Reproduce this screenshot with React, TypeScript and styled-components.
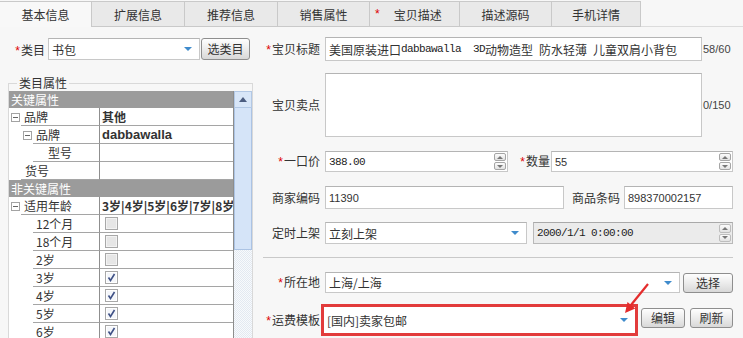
import React from "react";
import styled, { createGlobalStyle } from "styled-components";

const CJK = '"Noto Sans CJK SC", "Microsoft YaHei", sans-serif';
const SANS = '"Liberation Sans", Arial, "Noto Sans CJK SC", sans-serif';
const MONO = '"Liberation Mono", "Courier New", monospace';

const GlobalStyle = createGlobalStyle`
  html, body { margin: 0; padding: 0; background: #f7f7f7; }
  body { font-family: ${CJK}; font-size: 12px; color: #333; }
  * { box-sizing: border-box; }
`;

const TABS = [
  { label: "基本信息", width: 92, active: true },
  { label: "扩展信息", width: 93 },
  { label: "推荐信息", width: 93 },
  { label: "销售属性", width: 92 },
  { label: "宝贝描述", width: 90, required: true },
  { label: "描述源码", width: 92 },
  { label: "手机详情", width: 89 },
];

type TreeItem =
  | { kind: "head"; text: string }
  | {
      kind: "row";
      name: string;
      gutter: number;
      pad: number;
      toggleAt?: number;
      value?: React.ReactNode;
      check?: boolean;
    };

const Check = ({ checked }: { checked?: boolean }) => (
  <svg width="13" height="13" viewBox="0 0 13 13">
    <rect x="0.5" y="0.5" width="12" height="12" fill={checked ? "#f4f6fa" : "#e6e6e6"} stroke="#a8a8a8" />
    <rect x="1.5" y="1.5" width="10" height="10" fill="none" stroke={checked ? "#ffffff" : "#f3f3f3"} />
    {checked && (
      <path d="M3.5 6.5 L5.5 9.5 L9.5 3" fill="none" stroke="#3f5186" strokeWidth="1.6" />
    )}
  </svg>
);

// built at render time so the styled parts below are already defined
function buildTree(): TreeItem[] {
  return [
    { kind: "head", text: "关键属性" },
    { kind: "row", name: "品牌", gutter: 12, pad: 3, toggleAt: 2, value: <b>其他</b> },
    { kind: "row", name: "品牌", gutter: 24, pad: 3, toggleAt: 14, value: <BoldLatin>dabbawalla</BoldLatin> },
    { kind: "row", name: "型号", gutter: 24, pad: 15 },
    { kind: "row", name: "货号", gutter: 12, pad: 4 },
    { kind: "head", text: "非关键属性" },
    { kind: "row", name: "适用年龄", gutter: 12, pad: 3, toggleAt: 2, value: <b>3岁|4岁|5岁|6岁|7岁|8岁</b> },
    { kind: "row", name: "12个月", gutter: 24, pad: 3, check: true, value: <Check /> },
    { kind: "row", name: "18个月", gutter: 24, pad: 3, check: true, value: <Check /> },
    { kind: "row", name: "2岁", gutter: 24, pad: 3, check: true, value: <Check /> },
    { kind: "row", name: "3岁", gutter: 24, pad: 3, check: true, value: <Check checked /> },
    { kind: "row", name: "4岁", gutter: 24, pad: 3, check: true, value: <Check checked /> },
    { kind: "row", name: "5岁", gutter: 24, pad: 3, check: true, value: <Check checked /> },
    { kind: "row", name: "6岁", gutter: 24, pad: 3, check: true, value: <Check checked /> },
  ];
}

const Spinner = ({ disabled }: { disabled?: boolean }) => (
  <Spin>
    <SpinBtn $disabled={disabled}>
      <Tri $up />
    </SpinBtn>
    <SpinBtn $disabled={disabled}>
      <Tri />
    </SpinBtn>
  </Spin>
);

export default function App() {
  const tree = buildTree();
  return (
    <Page>
      <GlobalStyle />
      <TabBar>
        {TABS.map((t) => (
          <Tab key={t.label} $w={t.width} $active={!!t.active} $req={!!t.required}>
            {t.required && <TabStar>*</TabStar>}
            {t.label}
          </Tab>
        ))}
        <TabFiller />
      </TabBar>

      <Body>
        <LeftCol>
          <LeftRow>
            <LeftLabel>
              <Req>*</Req>类目
            </LeftLabel>
            <Field $w={152}>
              <Value>书包</Value>
              <DropArrow />
            </Field>
            <Button $w={49} $h={22} style={{ marginLeft: 1 }}>
              选类目
            </Button>
          </LeftRow>

          <Fieldset>
            <Legend>类目属性</Legend>
            <TreeBox>
              <Tree>
                {tree.map((item, i) =>
                  item.kind === "head" ? (
                    <HeadRow key={i}>{item.text}</HeadRow>
                  ) : (
                    <TreeRow key={i}>
                      <NameCell>
                        <Gutter $w={item.gutter}>
                          {item.toggleAt !== undefined && <Toggle $ml={item.toggleAt} />}
                        </Gutter>
                        <NameBox $pad={item.pad}>{item.name}</NameBox>
                      </NameCell>
                      <ValueCell $check={!!item.check}>{item.value}</ValueCell>
                    </TreeRow>
                  )
                )}
              </Tree>
              <ScrollBar>
                <ScrollUp>
                  <UpTri />
                </ScrollUp>
                <Thumb />
              </ScrollBar>
            </TreeBox>
          </Fieldset>
        </LeftCol>

        <RightCol>
          <Row $mt={0} $h={24}>
            <Label>
              <Req>*</Req>宝贝标题
            </Label>
            <Field $w={377}>
              <Value>
                美国原装进口<Mono>dabbawalla  3D</Mono>动物造型<Mono> </Mono>防水轻薄<Mono> </Mono>儿童双肩小背包
              </Value>
            </Field>
            <Counter>58/60</Counter>
          </Row>

          <Row $mt={12} $h={64}>
            <Label>宝贝卖点</Label>
            <Field $w={377} />
            <Counter>0/150</Counter>
          </Row>

          <Row $mt={14} $h={21}>
            <Label>
              <Req>*</Req>一口价
            </Label>
            <Field $w={183}>
              <Value>
                <Mono>388.00</Mono>
              </Value>
              <Spinner />
            </Field>
            <Label $w={42} $mr={1}>
              <Req>*</Req>数量
            </Label>
            <Field $w={182}>
              <Value>
                <Num>55</Num>
              </Value>
              <Spinner />
            </Field>
          </Row>

          <Row $mt={14} $h={23}>
            <Label>商家编码</Label>
            <Field $w={239}>
              <Value>
                <Num>11390</Num>
              </Value>
            </Field>
            <Label $w={56} $mr={4}>
              商品条码
            </Label>
            <Field $w={109}>
              <Value>
                <Num>898370002157</Num>
              </Value>
            </Field>
          </Row>

          <Row $mt={13} $h={22}>
            <Label>定时上架</Label>
            <Field $w={202}>
              <Value>立刻上架</Value>
              <DropArrow />
            </Field>
            <Field $w={200} $disabled style={{ marginLeft: 6 }}>
              <Value>
                <Mono>2000/1/1 0:00:00</Mono>
              </Value>
              <Spinner disabled />
            </Field>
          </Row>

          <Divider />

          <Row $mt={14} $h={21}>
            <Label>
              <Req>*</Req>所在地
            </Label>
            <Field $w={355}>
              <Value>上海/上海</Value>
              <DropArrow />
            </Field>
            <Button $w={50} $h={20} style={{ marginLeft: 3 }}>
              选择
            </Button>
          </Row>

          <Row $mt={11} $h={32}>
            <Label $mr={1}>
              <Req>*</Req>运费模板
            </Label>
            <RedBox>
              <Field $w={311} $plain>
                <Value>[国内]卖家包邮</Value>
                <DropArrow />
              </Field>
            </RedBox>
            <Button $w={44} $h={20} style={{ marginLeft: 3, marginBottom: 5 }}>
              编辑
            </Button>
            <Button $w={43} $h={20} style={{ marginLeft: 5, marginBottom: 5 }}>
              刷新
            </Button>
          </Row>
        </RightCol>
      </Body>

      <Annotation width="743" height="338" viewBox="0 0 743 338">
        <line x1="648" y1="284" x2="631" y2="305" stroke="#e42c2c" strokeWidth="2.2" />
        <polygon points="625,313 627.5,302 635.3,308.5" fill="#e42c2c" />
      </Annotation>
    </Page>
  );
}

const Page = styled.div`
  position: relative;
  width: 743px;
  height: 338px;
  overflow: hidden;
  background: #f7f7f7;
`;

const TabBar = styled.div`
  display: flex;
  height: 27px;
  padding-top: 1px;
`;

const Tab = styled.div<{ $w: number; $active: boolean; $req: boolean }>`
  width: ${(p) => p.$w}px;
  height: 26px;
  display: flex;
  align-items: center;
  justify-content: ${(p) => (p.$req ? "flex-start" : "center")};
  padding-left: ${(p) => (p.$req ? 5 : 0)}px;
  border-top: 1px solid #c9c9c9;
  border-right: 1px solid #c9c9c9;
  border-bottom: ${(p) => (p.$active ? "none" : "1px solid #c9c9c9")};
  background: ${(p) => (p.$active ? "#f8f8f8" : "#e9e9e9")};
  color: #333;
  white-space: nowrap;
  flex-shrink: 0;
`;

const TabStar = styled.span`
  color: #d00;
  font-family: ${SANS};
  margin-right: 14px;
`;

const TabFiller = styled.div`
  flex: 1;
  border-bottom: 1px solid #dcdcdc;
`;

const Body = styled.div`
  display: flex;
  padding-top: 10px;
`;

const LeftCol = styled.div`
  width: 255px;
  flex-shrink: 0;
`;

const LeftRow = styled.div`
  display: flex;
  align-items: center;
  height: 22px;
  margin-top: 1px;
`;

const LeftLabel = styled.label`
  width: 47px;
  padding-right: 2px;
  margin-right: 1px;
  text-align: right;
  white-space: nowrap;
`;

const Req = styled.span`
  color: #d00;
  font-family: ${SANS};
  font-size: 12px;
  margin-right: 1px;
`;

const Fieldset = styled.fieldset`
  margin: 16px 0 0 8px;
  padding: 1px 0 0 0;
  width: 245px;
  height: 270px;
  min-width: 0;
  border: 1px solid #d9d9d9;
`;

const Legend = styled.legend`
  margin-left: 8px;
  padding: 0 2px;
  font-size: 12px;
  line-height: 14px;
  color: #333;
`;

const TreeBox = styled.div`
  display: flex;
  height: 100%;
  overflow: hidden;
`;

const Tree = styled.div`
  width: 225px;
  border-right: 1px solid #8d8d8d;
  background: #fff;
  overflow: hidden;
`;

const HeadRow = styled.div`
  height: 17px;
  line-height: 17px;
  padding-left: 2px;
  background: #9b9b9b;
  color: #fff;
  white-space: nowrap;
`;

const TreeRow = styled.div`
  display: grid;
  grid-template-columns: 90px 1fr;
  height: 18px;
`;

const NameCell = styled.div`
  display: flex;
  min-width: 0;
`;

const Gutter = styled.div<{ $w: number }>`
  width: ${(p) => p.$w}px;
  flex-shrink: 0;
  display: flex;
  align-items: center;
`;

const Toggle = styled.span<{ $ml: number }>`
  position: relative;
  width: 9px;
  height: 9px;
  margin-left: ${(p) => p.$ml}px;
  border: 1px solid #a3a3a3;
  background: #fff;
  flex-shrink: 0;
  &::after {
    content: "";
    position: absolute;
    left: 1px;
    top: 3px;
    width: 5px;
    height: 1px;
    background: #666;
  }
`;

const NameBox = styled.div<{ $pad: number }>`
  flex: 1;
  display: flex;
  align-items: center;
  padding-left: ${(p) => p.$pad}px;
  border-bottom: 1px solid #a5a5a5;
  white-space: nowrap;
  overflow: hidden;
`;

const ValueCell = styled.div<{ $check?: boolean }>`
  display: flex;
  align-items: center;
  padding-left: ${(p) => (p.$check ? 5 : 2)}px;
  border-left: 1px solid #8f8f8f;
  border-bottom: 1px solid #a5a5a5;
  white-space: nowrap;
  overflow: hidden;
  color: #333;
  b {
    font-weight: 700;
  }
`;

const BoldLatin = styled.span`
  font-family: ${SANS};
  font-weight: 700;
  font-size: 13px;
`;

const ScrollBar = styled.div`
  width: 18px;
  display: flex;
  flex-direction: column;
  background: repeating-conic-gradient(#e3e9f1 0 25%, #f8fafc 0 50%) 0 0 / 2px 2px;
`;

const ScrollUp = styled.div`
  height: 17px;
  display: flex;
  align-items: center;
  justify-content: center;
  background: #d8e6f8;
  border: 1px solid #b2c8e5;
`;

const UpTri = styled.span`
  width: 0;
  height: 0;
  border-left: 4px solid transparent;
  border-right: 4px solid transparent;
  border-bottom: 5px solid #4c5d80;
`;

const Thumb = styled.div`
  height: 142px;
  background: #d5e4f8;
  border: 1px solid #abc3e4;
  border-top: none;
`;

const RightCol = styled.div`
  flex: 1;
  margin-left: 7px;
`;

const Row = styled.div<{ $mt: number; $h: number }>`
  display: flex;
  align-items: center;
  margin-top: ${(p) => p.$mt}px;
  height: ${(p) => p.$h}px;
`;

const Label = styled.label<{ $w?: number; $mr?: number }>`
  width: ${(p) => p.$w ?? 58}px;
  margin-right: ${(p) => p.$mr ?? 5}px;
  text-align: right;
  white-space: nowrap;
  flex-shrink: 0;
  line-height: 16px;
`;

const Field = styled.div<{ $w: number; $disabled?: boolean; $plain?: boolean }>`
  position: relative;
  display: flex;
  align-items: stretch;
  width: ${(p) => p.$w}px;
  height: 100%;
  flex-shrink: 0;
  border: ${(p) => (p.$plain ? "none" : p.$disabled ? "1px solid #b9b9b9" : "1px solid #c8c8c8")};
  border-top-color: ${(p) => (p.$plain ? "transparent" : p.$disabled ? "#a9a9a9" : "#b4b4b4")};
  background: ${(p) => (p.$disabled ? "#ebebeb" : "#fff")};
`;

const Value = styled.div`
  flex: 1;
  display: flex;
  align-items: center;
  padding-left: 3px;
  white-space: pre;
  overflow: hidden;
  color: #333;
`;

const Mono = styled.span`
  font-family: ${MONO};
  font-size: 11px;
  letter-spacing: -0.6px;
  white-space: pre;
  color: #222;
`;

const Num = styled.span`
  font-family: ${SANS};
  font-size: 11px;
`;

const Counter = styled.span`
  margin-left: 1px;
  font-family: ${SANS};
  font-size: 11px;
  color: #444;
  white-space: nowrap;
`;

const DropArrow = styled.span`
  align-self: center;
  width: 0;
  height: 0;
  margin: 0 7px 0 4px;
  border-left: 4px solid transparent;
  border-right: 4px solid transparent;
  border-top: 4px solid #3f8bcc;
`;

const Spin = styled.div`
  display: flex;
  flex-direction: column;
  gap: 1px;
  width: 12px;
  margin: 1px 1px 1px 0;
`;

const SpinBtn = styled.span<{ $disabled?: boolean }>`
  flex: 1;
  display: flex;
  align-items: center;
  justify-content: center;
  border: 1px solid ${(p) => (p.$disabled ? "#bdbdbd" : "#a5a5a5")};
  border-radius: 2px;
  background: linear-gradient(#fcfcfc, #e2e2e2);
`;

const Tri = styled.span<{ $up?: boolean }>`
  width: 0;
  height: 0;
  border-left: 3px solid transparent;
  border-right: 3px solid transparent;
  ${(p) => (p.$up ? "border-bottom: 3px solid #777;" : "border-top: 3px solid #777;")}
`;

const Button = styled.button<{ $w: number; $h: number }>`
  width: ${(p) => p.$w}px;
  height: ${(p) => p.$h}px;
  padding: 0;
  flex-shrink: 0;
  border: 1px solid #8e8e8e;
  border-radius: 3px;
  background: linear-gradient(#fefefe, #ececec 50%, #d8d8d8);
  font-family: ${CJK};
  font-size: 12px;
  color: #333;
  line-height: 1;
`;

const Divider = styled.div`
  margin: 13px 0 0 1px;
  width: 470px;
  height: 1px;
  background: #c9c9c9;
`;

const RedBox = styled.div`
  width: 317px;
  height: 32px;
  flex-shrink: 0;
  padding: 0;
  border: 3px solid #e23b3b;
  background: #fff;
`;

const Annotation = styled.svg`
  position: absolute;
  left: 0;
  top: 0;
  pointer-events: none;
`;
